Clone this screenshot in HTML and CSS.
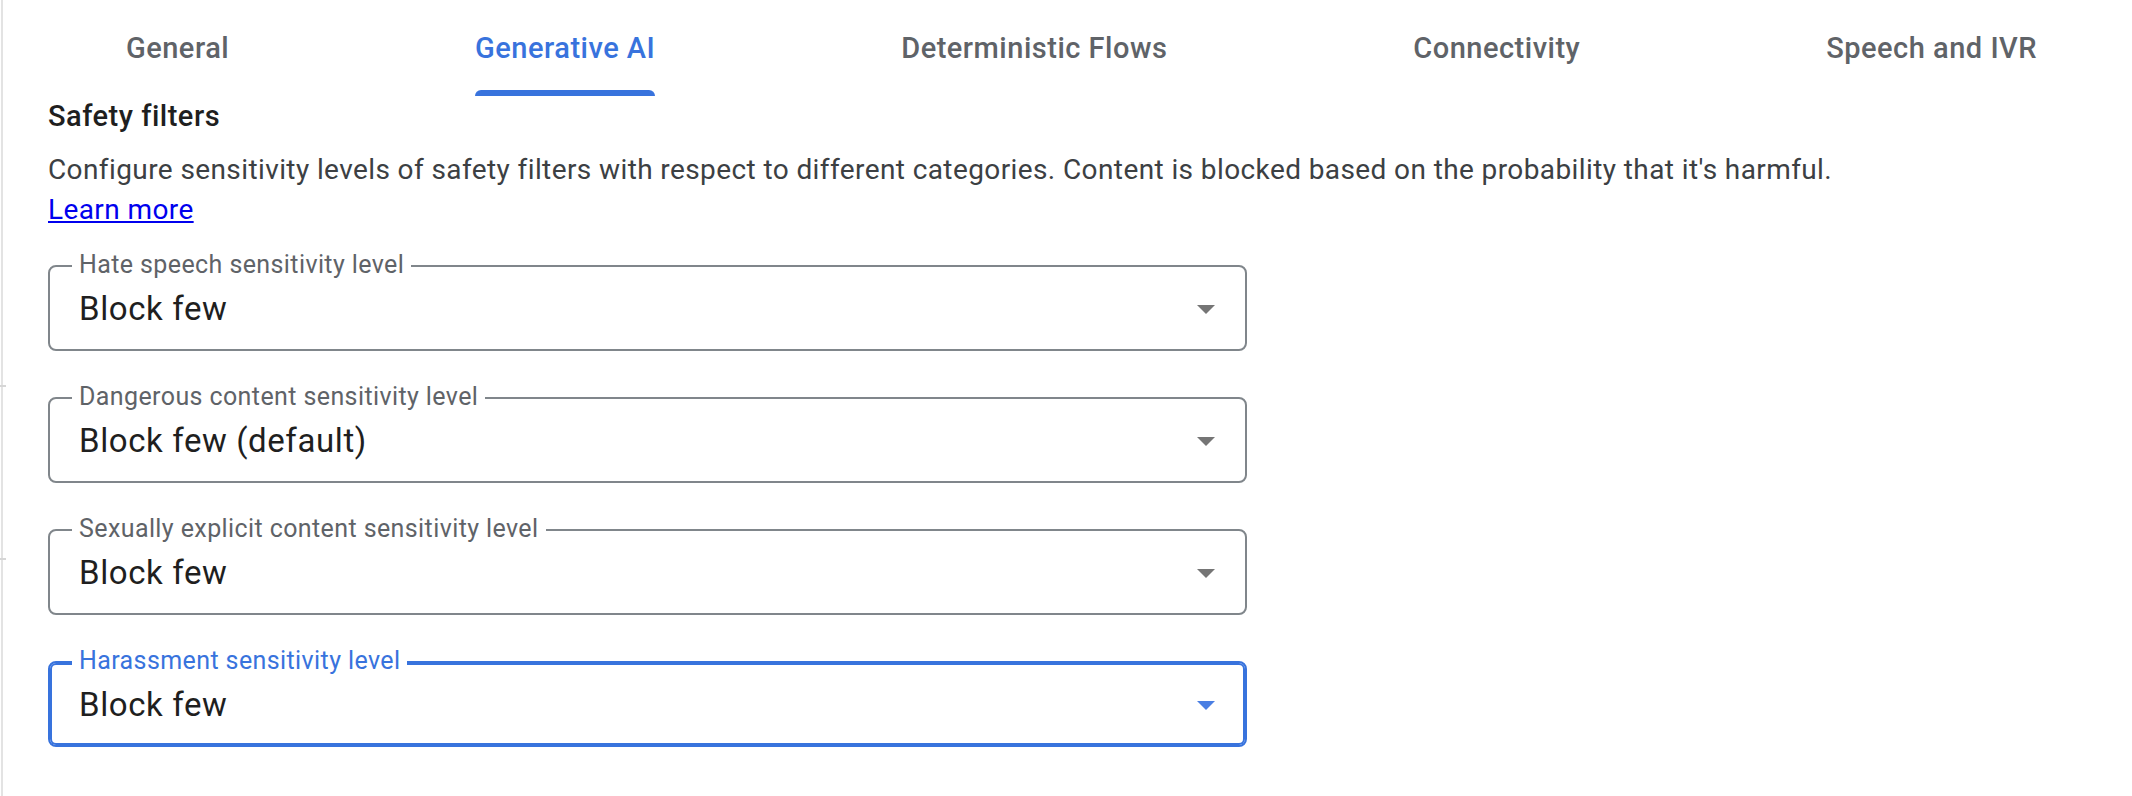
FILE: index.html
```html
<!DOCTYPE html>
<html lang="en">
<head>
<meta charset="utf-8">
<title>Agent settings - Generative AI</title>
<link rel="stylesheet" href="styles.css">
</head>
<body>
<div class="page">
  <span class="tick tick-a"></span>
  <span class="tick tick-b"></span>
  <nav class="tabs">
    <div class="tab-list">
      <div class="tab"><div class="tab-inner"><span class="tab-label">General</span><span class="ink"></span></div></div>
      <div class="tab active"><div class="tab-inner"><span class="tab-label">Generative AI</span><span class="ink"></span></div></div>
      <div class="tab"><div class="tab-inner"><span class="tab-label">Deterministic Flows</span><span class="ink"></span></div></div>
      <div class="tab"><div class="tab-inner"><span class="tab-label">Connectivity</span><span class="ink"></span></div></div>
      <div class="tab"><div class="tab-inner"><span class="tab-label">Speech and IVR</span><span class="ink"></span></div></div>
    </div>
  </nav>
  <section class="content">
    <h2 class="title">Safety filters</h2>
    <p class="desc">Configure sensitivity levels of safety filters with respect to different categories. Content is blocked based on the probability that it's harmful.</p>
    <div class="learn-row"><a class="learn" href="#">Learn more</a></div>
    <div class="fields">
      <div class="field">
        <span class="label">Hate speech sensitivity level</span>
        <span class="value">Block few</span>
        <svg class="arrow" viewBox="0 0 10 5" aria-hidden="true"><path d="M0 0L5 5L10 0Z"/></svg>
      </div>
      <div class="field">
        <span class="label">Dangerous content sensitivity level</span>
        <span class="value">Block few (default)</span>
        <svg class="arrow" viewBox="0 0 10 5" aria-hidden="true"><path d="M0 0L5 5L10 0Z"/></svg>
      </div>
      <div class="field">
        <span class="label">Sexually explicit content sensitivity level</span>
        <span class="value">Block few</span>
        <svg class="arrow" viewBox="0 0 10 5" aria-hidden="true"><path d="M0 0L5 5L10 0Z"/></svg>
      </div>
      <div class="field focused">
        <span class="label">Harassment sensitivity level</span>
        <span class="value">Block few</span>
        <svg class="arrow" viewBox="0 0 10 5" aria-hidden="true"><path d="M0 0L5 5L10 0Z"/></svg>
      </div>
    </div>
  </section>
</div>
</body>
</html>
```

FILE: styles.css
```css
html, body {
  margin: 0;
  padding: 0;
  background: #ffffff;
}
body {
  overflow: hidden;
  font-family: Roboto, "Liberation Sans", sans-serif;
}
.page {
  position: relative;
  margin-left: 1px;
  border-left: 2px solid #e3e3e3;
  min-height: 796px;
}
.tick {
  position: absolute;
  left: -3px;
  width: 6px;
  height: 2px;
  background: #d6d6d6;
}
.tick-a { top: 385px; }
.tick-b { top: 558px; }

.tabs {
  overflow: hidden;
}
.tab-list {
  display: flex;
  width: 2157px;
}
.tab {
  flex: 1 1 auto;
  display: flex;
  justify-content: center;
}
.tab-inner {
  display: flex;
  flex-direction: column;
  height: 96px;
}
.tab-label {
  flex: 1;
  display: flex;
  align-items: center;
  padding-top: 5px;
  font-family: Roboto, sans-serif;
  font-weight: 500;
  font-size: 29px;
  letter-spacing: 0.5px;
  color: #5f6368;
  white-space: nowrap;
}
.ink {
  height: 6px;
  border-radius: 6px 6px 0 0;
}
.tab.active .tab-label { color: #3873dd; }
.tab.active .ink { background: #3873dd; }

.content {
  padding-left: 45px;
}
.title {
  margin: 2px 0 0;
  font-family: Roboto, sans-serif;
  font-weight: 500;
  font-size: 29px;
  line-height: 36px;
  letter-spacing: 0.5px;
  color: #1f1f1f;
}
.desc {
  margin: 16px 0 0;
  font-size: 28px;
  line-height: 40px;
  letter-spacing: 0.4px;
  color: #3c4043;
}
.learn-row {
  font-size: 28px;
  line-height: 40px;
  letter-spacing: 0.4px;
}
.learn {
  color: #0000ee;
  text-decoration: underline;
}
.fields {
  margin-top: 35px;
  width: 1199px;
  display: flex;
  flex-direction: column;
  gap: 46px;
}
.field {
  position: relative;
  height: 86px;
  box-sizing: border-box;
  border: 2px solid #80868b;
  border-radius: 8px;
  display: flex;
  align-items: center;
  padding: 2px 30px 0 29px;
}
.label {
  position: absolute;
  top: -14px;
  left: 22px;
  padding: 0 7px;
  background: #ffffff;
  font-size: 25px;
  line-height: 24px;
  letter-spacing: 0.4px;
  color: #5f6368;
  white-space: nowrap;
}
.value {
  flex: 1;
  font-size: 33px;
  line-height: 32px;
  letter-spacing: 0.6px;
  color: #1f1f1f;
}
.arrow {
  width: 18px;
  height: 9px;
  fill: #757575;
}
.field.focused {
  border-color: #3873dd;
  box-shadow: inset 0 0 0 2px #3873dd;
}
.field.focused .label { color: #3873dd; }
.field.focused .arrow { fill: #4a7fe3; }
```
